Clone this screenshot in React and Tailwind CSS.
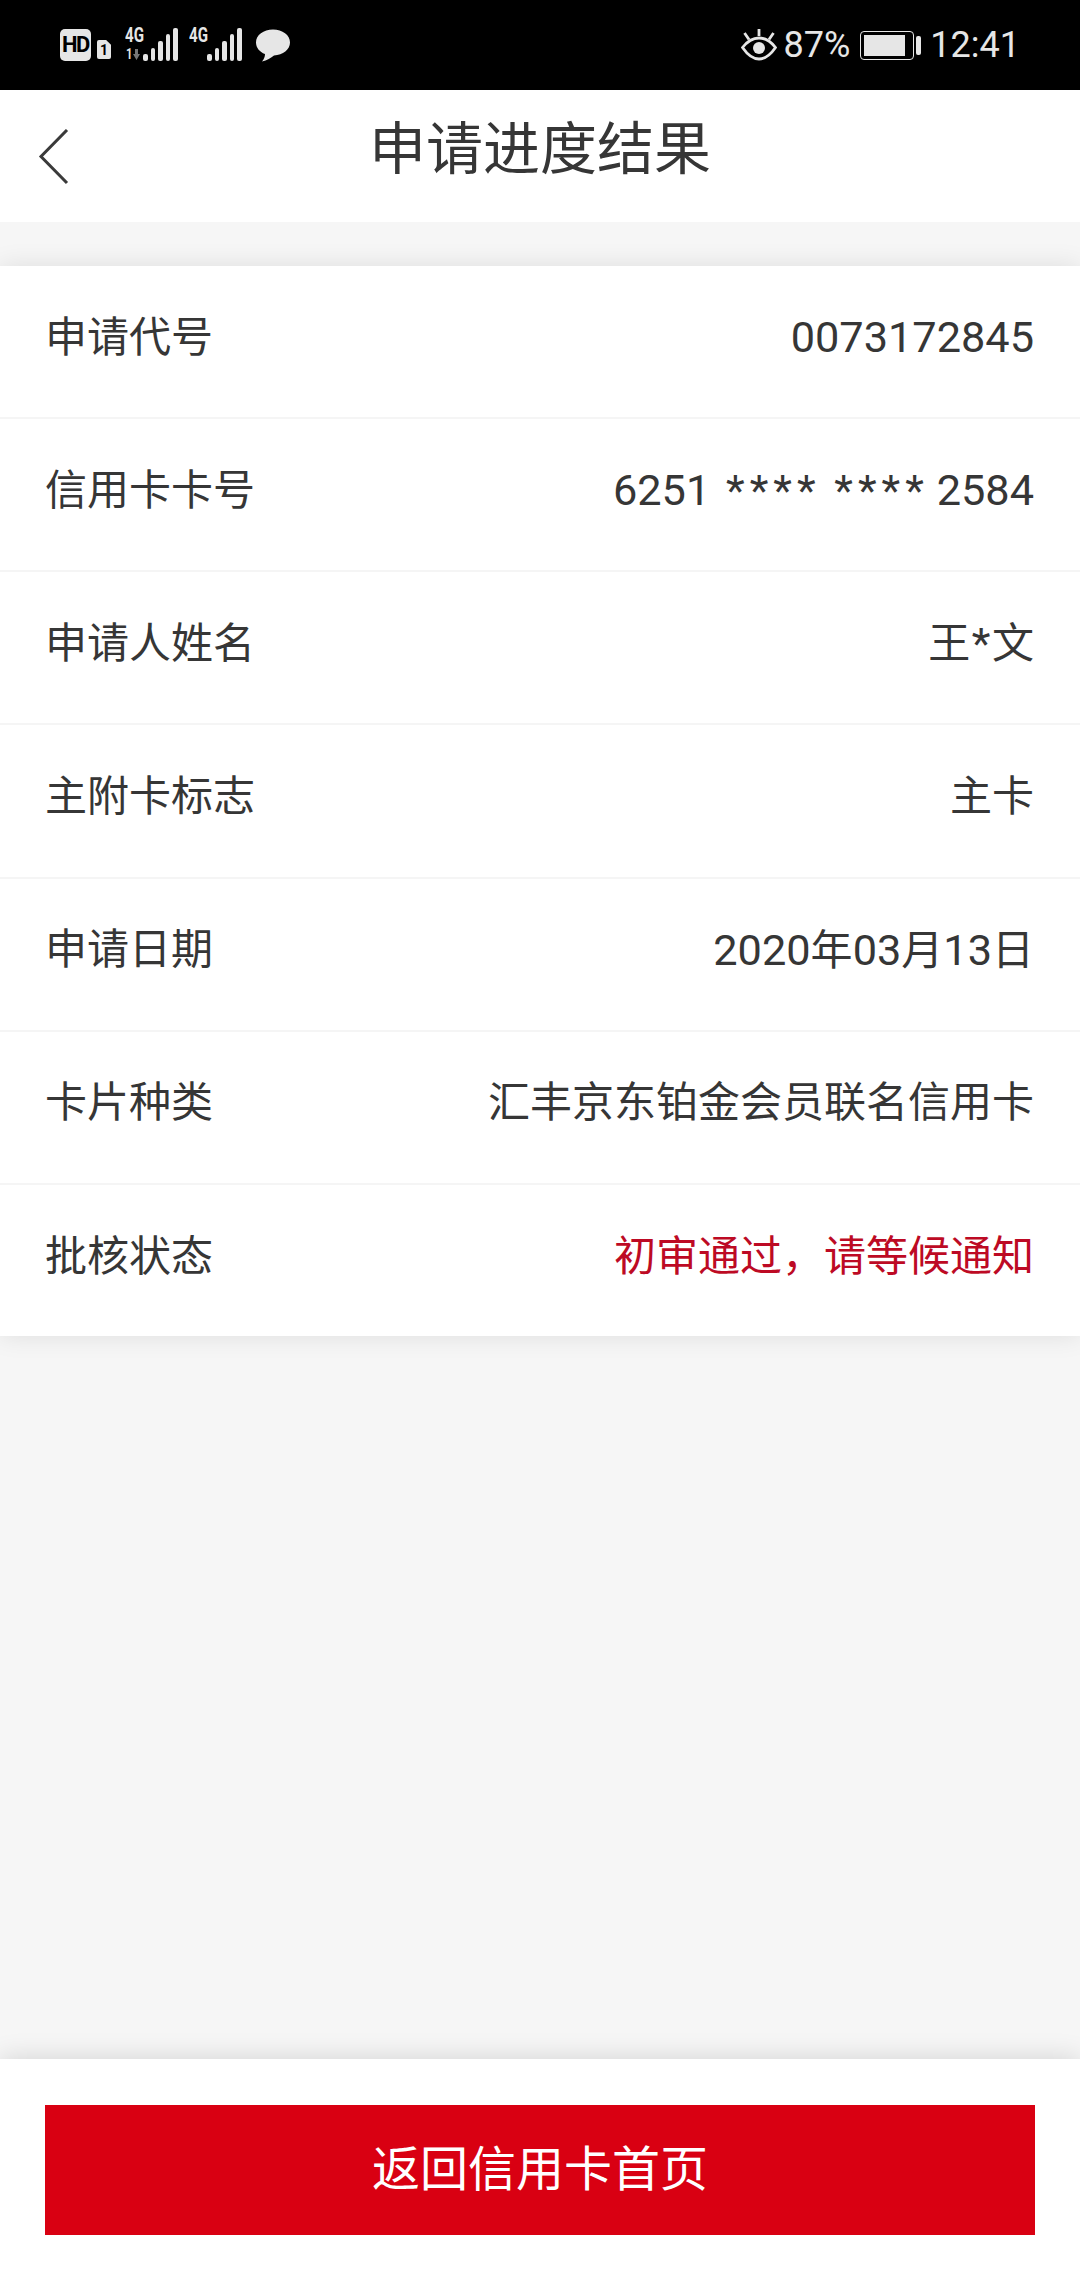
const D = ({ children }) => <span className="text-[43.3px]">{children}</span>;

const rows = [
  ['申请代号', <D>0073172845</D>],
  ['信用卡卡号', <D>6251 <span className="tracking-[5px] ml-[5px]">****</span> <span className="tracking-[5px] ml-[3px] mr-[-3px]">****</span> 2584</D>],
  ['申请人姓名', <>王<span className="text-[43.3px] px-[1.5px]">*</span>文</>],
  ['主附卡标志', '主卡'],
  ['申请日期', <><D>2020</D>年<D>03</D>月<D>13</D>日</>],
  ['卡片种类', '汇丰京东铂金会员联名信用卡'],
  ['批核状态', '初审通过，请等候通知', true],
];

function Signal({ sub }) {
  const hs = [7, 13, 20, 27, 33];
  return (
    <span className="relative flex items-end gap-[3px] h-[33px] pl-[18px]">
      <span className="absolute left-0 top-[-3px] text-[21px] font-bold leading-[21px] origin-left scale-x-[0.72]">4G</span>
      {sub && (
        <span className="absolute left-[1px] bottom-0 flex items-center">
          <span className="text-[14px] font-bold leading-[14px] origin-left scale-x-[0.8]">1</span>
          <svg width="7" height="11" viewBox="0 0 7 11" className="ml-[-1px]"><path d="M2 0H5V5H7L3.5 11L0 5H2Z" fill="#777777" /></svg>
        </span>
      )}
      {hs.map((h, i) => (
        <span key={i} className="w-[4.5px] rounded-[2px] bg-[#e6e6e6]" style={{ height: h }} />
      ))}
    </span>
  );
}

function StatusBar() {
  return (
    <div className="h-[90px] bg-black flex items-center justify-between pl-[60px] pr-[60px] text-[#e6e6e6] font-['Roboto',sans-serif]">
      <div className="flex items-center h-[33px] mt-[-1px]">
        <span className="w-[31px] h-[32px] rounded-[5px] bg-[#e6e6e6] text-black text-[22px] font-bold leading-none flex items-center justify-center tracking-[-1.5px]">HD</span>
        <span className="ml-[6px] w-[14px] h-[19px] mt-[10px] rounded-[2px] bg-[#e6e6e6] text-black text-[14px] font-bold leading-none flex items-center justify-center [clip-path:polygon(0_0,65%_0,100%_25%,100%_100%,0_100%)]">1</span>
        <span className="ml-[14px]"><Signal sub /></span>
        <span className="ml-[11.5px]"><Signal /></span>
        <svg className="ml-[14px] mt-[2px]" width="34" height="33" viewBox="0 0 34 33">
          <path d="M17 0.5C26.5 0.5 34 6 34 13.5C34 20.5 27 26 18 26.5C15 28.5 11 31.5 6 32.5C8 30 9 27.5 9 25C3.5 23 0 18.5 0 13.5C0 6 7.5 0.5 17 0.5Z" fill="#e6e6e6" />
        </svg>
      </div>
      <div className="flex items-center h-[33px]">
        <svg width="36" height="32" viewBox="0 0 36 32" fill="none" stroke="#e6e6e6" strokeWidth="2.8">
          <path d="M1.5 18.5C7 11.5 12 9 18 9C24 9 29 11.5 34.5 18.5C29 26.5 24 30 18 30C12 30 7 26.5 1.5 18.5Z" />
          <circle cx="18" cy="19" r="6" fill="#e6e6e6" stroke="none" />
          <path d="M18 0V7M3.5 4L8 10.5M32.5 4L28 10.5" />
        </svg>
        <span className="ml-[7px] text-[36px] leading-none">87%</span>
        <span className="ml-[10px] w-[54px] h-[29px] rounded-[4px] border-[1.5px] border-[#e6e6e6] p-[3px] flex">
          <span className="w-[41px] h-full bg-[#e6e6e6]" />
        </span>
        <span className="ml-[2px] w-[5px] h-[19px] rounded-[2px] bg-[#e6e6e6]" />
        <span className="ml-[9px] text-[36px] leading-none">12:41</span>
      </div>
    </div>
  );
}

export default function App() {
  return (
    <div className="w-[1080px] h-[2280px] flex flex-col bg-[#f6f6f6] font-['Roboto','Noto_Sans_CJK_SC',sans-serif] text-[#363636] overflow-hidden">
      <StatusBar />
      <header className="relative h-[132px] bg-white flex items-center justify-center">
        <svg className="absolute left-[38px] top-[39px]" width="32" height="56" viewBox="0 0 32 56" fill="none" stroke="#3a3a3a" strokeWidth="3">
          <path d="M29 1L3 27.5L29 54" />
        </svg>
        <h1 className="text-[57px] leading-none mt-[-13px]">申请进度结果</h1>
      </header>
      <main className="flex-1 pt-[44px]">
        <section className="bg-white shadow-[0_0_24px_rgba(0,0,0,0.10)]">
          {rows.map(([k, v, red], i) => (
            <div
              key={k}
              className={`pl-[45px] pr-[46px] flex items-center justify-between text-[42px] leading-none ${i ? 'h-[153.2px] border-t-2 border-[#f5f5f5]' : 'h-[151px]'}`}
            >
              <span className="mt-[-8px]">{k}</span>
              <span className={`mt-[-8px] ${red ? 'text-[#bd0a24]' : ''}`}>{v}</span>
            </div>
          ))}
        </section>
      </main>
      <footer className="h-[221px] shrink-0 bg-white px-[45px] pt-[46px] shadow-[0_-2px_24px_rgba(0,0,0,0.13)]">
        <button className="w-full h-[130px] bg-[#d90012] text-white text-[48px] leading-none flex items-center justify-center">
          返回信用卡首页
        </button>
      </footer>
    </div>
  );
}
